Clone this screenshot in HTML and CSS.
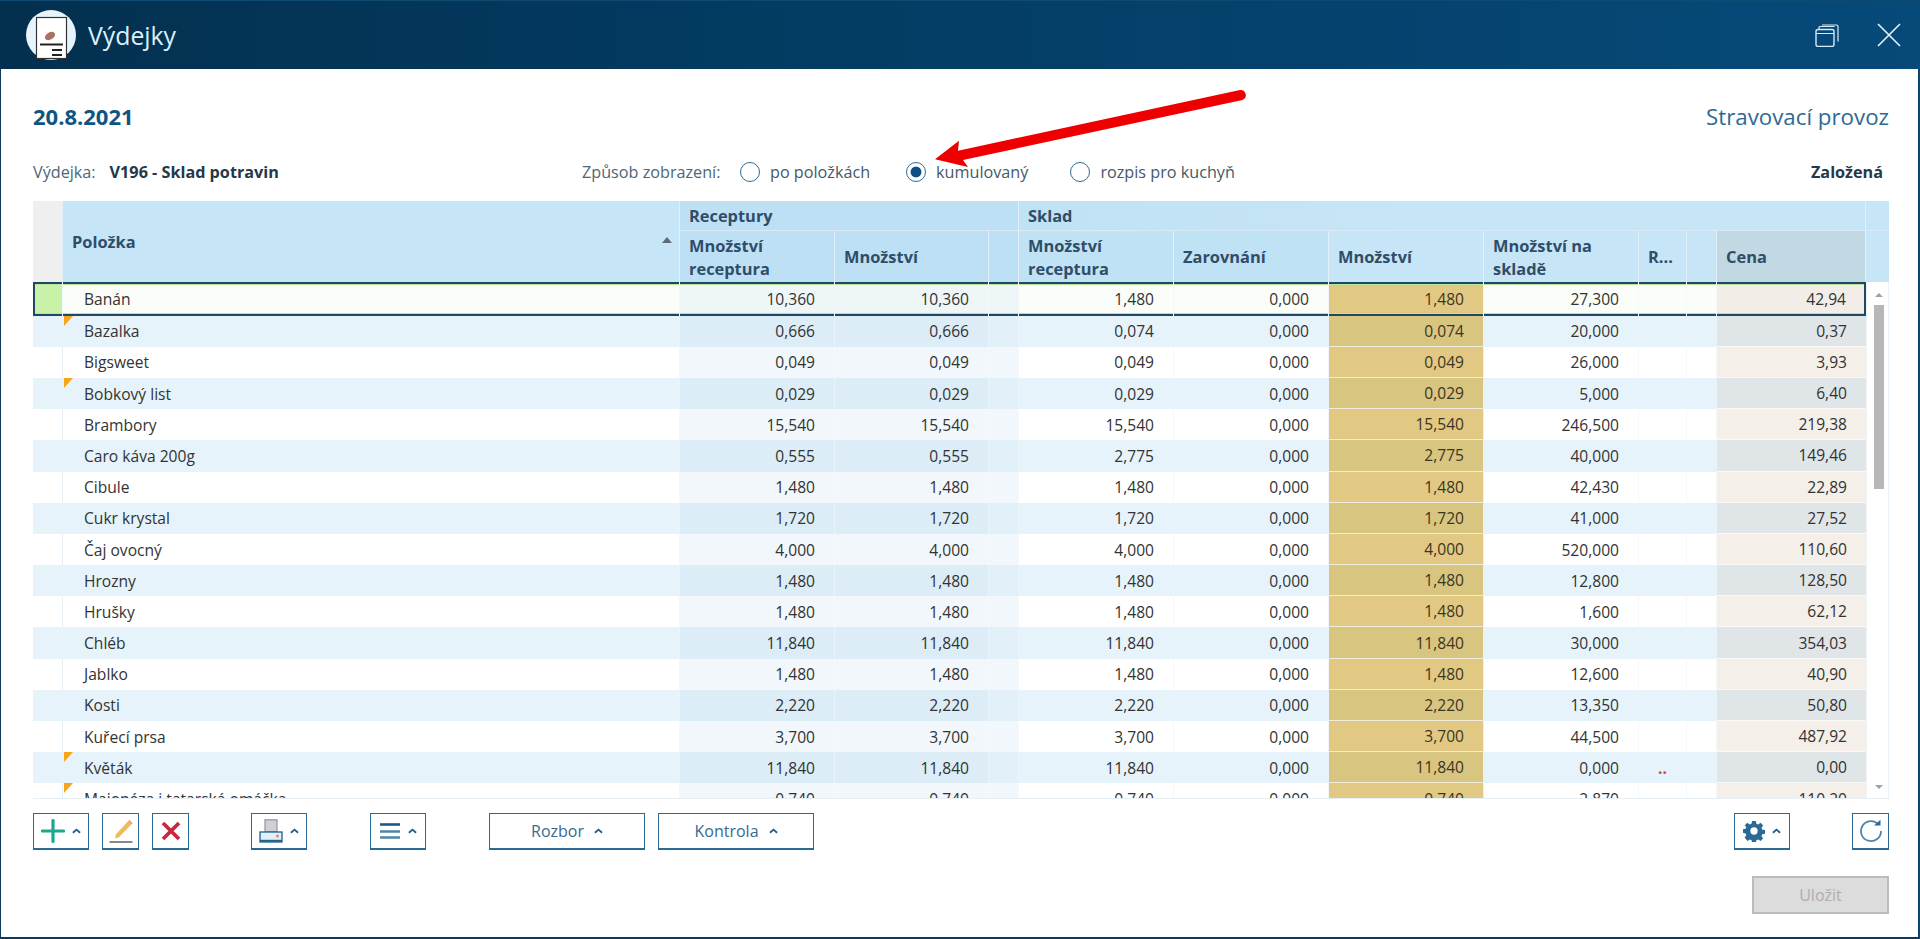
FILE: index.html
```html
<!DOCTYPE html>
<html lang="cs">
<head>
<meta charset="utf-8">
<title>Výdejky</title>
<link rel="stylesheet" href="styles.css">
</head>
<body>
<div class="window">
  <header class="titlebar">
    <svg class="logo" viewBox="0 0 50 50" width="50" height="50">
      <circle cx="25" cy="25" r="25" fill="#e8f4fc"/>
      <rect x="10.5" y="7.5" width="30" height="41" fill="#fff" stroke="#333" stroke-width="1.2"/>
      <ellipse cx="24" cy="26" rx="5.5" ry="3.6" fill="#a9745f" transform="rotate(-30 24 26)"/>
      <path d="M14 34.5h23" stroke="#222" stroke-width="2"/>
      <path d="M26 40h10M26 45h10" stroke="#222" stroke-width="2"/>
    </svg>
    <h1 class="app-title">Výdejky</h1>
    <div class="win-controls">
      <svg viewBox="0 0 24 23" width="24" height="23" class="win-icon">
        <rect x="1" y="5.5" width="18" height="17" rx="2" fill="none" stroke="#d8eaf6" stroke-width="1.4"/>
        <path d="M1 9.5h18M4 5V3.4Q4 2.5 5 2.5h14.6" fill="none" stroke="#d8eaf6" stroke-width="1.2"/>
        <path d="M7 1h14.5q1.500 0 1.500 1.500v15" fill="none" stroke="#d8eaf6" stroke-width="1.2"/>
      </svg>
      <svg viewBox="0 0 24 24" width="24" height="24" class="win-icon">
        <path d="M1 1l22 22M23 1L1 23" stroke="#e8f3fb" stroke-width="1.6" fill="none"/>
      </svg>
    </div>
  </header>

  <main class="content">
    <div class="top-row">
      <div class="date">20.8.2021</div>
      <div class="place">Stravovací provoz</div>
    </div>

    <div class="info-row">
      <div class="doc"><span class="doc-label">Výdejka:</span><strong class="doc-value">V196 - Sklad potravin</strong></div>
      <div class="view-mode">
        <span class="mode-label">Způsob zobrazení:</span>
        <span class="option opt-a"><i class="radio"></i>po položkách</span>
        <span class="option opt-b"><i class="radio checked"></i>kumulovaný</span>
        <span class="option opt-c"><i class="radio"></i>rozpis pro kuchyň</span>
      </div>
      <strong class="state">Založená</strong>
    </div>

    <section class="table">
      <div class="thead">
        <div class="th th-ind"></div>
        <div class="th th-item">Položka<i class="sort"></i></div>
        <div class="th th-group th-rec">Receptury</div>
        <div class="th th-group th-sklad">Sklad</div>
        <div class="th th-end"></div>
        <div class="th th-sub dark">Množství receptura</div>
        <div class="th th-sub dark">Množství</div>
        <div class="th th-sub dark"></div>
        <div class="th th-sub mid">Množství receptura</div>
        <div class="th th-sub mid">Zarovnání</div>
        <div class="th th-sub">Množství</div>
        <div class="th th-sub">Množství na skladě</div>
        <div class="th th-sub">R...</div>
        <div class="th th-sub"></div>
        <div class="th th-sub th-cena">Cena</div>
        <div class="th th-end2"></div>
      </div>
      <div class="tbody">
        <div class="rows">
          <div class="row sel"><div class="c ind"></div><div class="c name">Banán</div><div class="c rc">10,360</div><div class="c rc">10,360</div><div class="c rc"></div><div class="c">1,480</div><div class="c">0,000</div><div class="c gold">1,480</div><div class="c">27,300</div><div class="c"></div><div class="c"></div><div class="c cena">42,94</div></div>
          <div class="row alt"><div class="c ind"></div><div class="c name flag">Bazalka</div><div class="c rc">0,666</div><div class="c rc">0,666</div><div class="c rc gapc"></div><div class="c">0,074</div><div class="c">0,000</div><div class="c gold">0,074</div><div class="c">20,000</div><div class="c"></div><div class="c"></div><div class="c cena">0,37</div></div>
          <div class="row"><div class="c ind"></div><div class="c name">Bigsweet</div><div class="c rc">0,049</div><div class="c rc">0,049</div><div class="c rc"></div><div class="c">0,049</div><div class="c">0,000</div><div class="c gold">0,049</div><div class="c">26,000</div><div class="c"></div><div class="c"></div><div class="c cena">3,93</div></div>
          <div class="row alt"><div class="c ind"></div><div class="c name flag">Bobkový list</div><div class="c rc">0,029</div><div class="c rc">0,029</div><div class="c rc gapc"></div><div class="c">0,029</div><div class="c">0,000</div><div class="c gold">0,029</div><div class="c">5,000</div><div class="c"></div><div class="c"></div><div class="c cena">6,40</div></div>
          <div class="row"><div class="c ind"></div><div class="c name">Brambory</div><div class="c rc">15,540</div><div class="c rc">15,540</div><div class="c rc"></div><div class="c">15,540</div><div class="c">0,000</div><div class="c gold">15,540</div><div class="c">246,500</div><div class="c"></div><div class="c"></div><div class="c cena">219,38</div></div>
          <div class="row alt"><div class="c ind"></div><div class="c name">Caro káva 200g</div><div class="c rc">0,555</div><div class="c rc">0,555</div><div class="c rc gapc"></div><div class="c">2,775</div><div class="c">0,000</div><div class="c gold">2,775</div><div class="c">40,000</div><div class="c"></div><div class="c"></div><div class="c cena">149,46</div></div>
          <div class="row"><div class="c ind"></div><div class="c name">Cibule</div><div class="c rc">1,480</div><div class="c rc">1,480</div><div class="c rc"></div><div class="c">1,480</div><div class="c">0,000</div><div class="c gold">1,480</div><div class="c">42,430</div><div class="c"></div><div class="c"></div><div class="c cena">22,89</div></div>
          <div class="row alt"><div class="c ind"></div><div class="c name">Cukr krystal</div><div class="c rc">1,720</div><div class="c rc">1,720</div><div class="c rc gapc"></div><div class="c">1,720</div><div class="c">0,000</div><div class="c gold">1,720</div><div class="c">41,000</div><div class="c"></div><div class="c"></div><div class="c cena">27,52</div></div>
          <div class="row"><div class="c ind"></div><div class="c name">Čaj ovocný</div><div class="c rc">4,000</div><div class="c rc">4,000</div><div class="c rc"></div><div class="c">4,000</div><div class="c">0,000</div><div class="c gold">4,000</div><div class="c">520,000</div><div class="c"></div><div class="c"></div><div class="c cena">110,60</div></div>
          <div class="row alt"><div class="c ind"></div><div class="c name">Hrozny</div><div class="c rc">1,480</div><div class="c rc">1,480</div><div class="c rc gapc"></div><div class="c">1,480</div><div class="c">0,000</div><div class="c gold">1,480</div><div class="c">12,800</div><div class="c"></div><div class="c"></div><div class="c cena">128,50</div></div>
          <div class="row"><div class="c ind"></div><div class="c name">Hrušky</div><div class="c rc">1,480</div><div class="c rc">1,480</div><div class="c rc"></div><div class="c">1,480</div><div class="c">0,000</div><div class="c gold">1,480</div><div class="c">1,600</div><div class="c"></div><div class="c"></div><div class="c cena">62,12</div></div>
          <div class="row alt"><div class="c ind"></div><div class="c name">Chléb</div><div class="c rc">11,840</div><div class="c rc">11,840</div><div class="c rc gapc"></div><div class="c">11,840</div><div class="c">0,000</div><div class="c gold">11,840</div><div class="c">30,000</div><div class="c"></div><div class="c"></div><div class="c cena">354,03</div></div>
          <div class="row"><div class="c ind"></div><div class="c name">Jablko</div><div class="c rc">1,480</div><div class="c rc">1,480</div><div class="c rc"></div><div class="c">1,480</div><div class="c">0,000</div><div class="c gold">1,480</div><div class="c">12,600</div><div class="c"></div><div class="c"></div><div class="c cena">40,90</div></div>
          <div class="row alt"><div class="c ind"></div><div class="c name">Kosti</div><div class="c rc">2,220</div><div class="c rc">2,220</div><div class="c rc gapc"></div><div class="c">2,220</div><div class="c">0,000</div><div class="c gold">2,220</div><div class="c">13,350</div><div class="c"></div><div class="c"></div><div class="c cena">50,80</div></div>
          <div class="row"><div class="c ind"></div><div class="c name">Kuřecí prsa</div><div class="c rc">3,700</div><div class="c rc">3,700</div><div class="c rc"></div><div class="c">3,700</div><div class="c">0,000</div><div class="c gold">3,700</div><div class="c">44,500</div><div class="c"></div><div class="c"></div><div class="c cena">487,92</div></div>
          <div class="row alt"><div class="c ind"></div><div class="c name flag">Květák</div><div class="c rc">11,840</div><div class="c rc">11,840</div><div class="c rc gapc"></div><div class="c">11,840</div><div class="c">0,000</div><div class="c gold">11,840</div><div class="c">0,000</div><div class="c warn">..</div><div class="c"></div><div class="c cena">0,00</div></div>
          <div class="row"><div class="c ind"></div><div class="c name flag">Majonéza i tatarská omáčka</div><div class="c rc">0,740</div><div class="c rc">0,740</div><div class="c rc"></div><div class="c">0,740</div><div class="c">0,000</div><div class="c gold">0,740</div><div class="c">2,870</div><div class="c"></div><div class="c"></div><div class="c cena">110,20</div></div>
        </div>
        <div class="scrollbar">
          <i class="sb-up"></i>
          <i class="sb-thumb"></i>
          <i class="sb-down"></i>
        </div>
      </div>
    </section>

    <div class="toolbar">
      <button class="btn btn-drop"><svg viewBox="0 0 24 24" width="24" height="24"><path d="M12 1.500v21M1.500 12h21" stroke="#1ba88f" stroke-width="3.200" stroke-linecap="round"/></svg><svg class="chev" viewBox="0 0 10 6" width="9" height="6"><path d="M1 5l4-3.500L9 5" fill="none" stroke="#1f5f8a" stroke-width="2"/></svg></button>
      <button class="btn btn-sq"><svg viewBox="0 0 26 26" width="26" height="26"><path d="M7 20.500l1-4.300L20 3.300l3.300 3.200L11 19.300z" fill="#f0bb5a"/><path d="M20 3.300l1.200-1.300 3.300 3.200-1.200 1.300z" fill="#ee8c8c"/><path d="M1.500 24h23" stroke="#8d8495" stroke-width="2"/></svg></button>
      <button class="btn btn-sq"><svg viewBox="0 0 20 20" width="20" height="20"><path d="M2 2l16 16M18 2L2 18" stroke="#c9283c" stroke-width="3.800"/></svg></button>
      <button class="btn btn-drop gap-s"><svg viewBox="0 0 24 24" width="24" height="24"><rect x="6" y="0.800" width="12" height="12" fill="#cfcfd4" stroke="#8b97a2" stroke-width="1.200"/><rect x="1" y="13" width="22" height="10" fill="#dff1f9" stroke="#1f5f8a" stroke-width="1.300"/><path d="M1 21.800h22" stroke="#1f5f8a" stroke-width="2"/><circle cx="18.500" cy="17" r="1.600" fill="#ee7f85"/></svg><svg class="chev" viewBox="0 0 10 6" width="9" height="6"><path d="M1 5l4-3.500L9 5" fill="none" stroke="#1f5f8a" stroke-width="2"/></svg></button>
      <button class="btn btn-drop gap-l"><svg viewBox="0 0 22 18" width="22" height="18"><path d="M1 2.500h20" stroke="#175a8a" stroke-width="2.600"/><path d="M1 9.500h20M1 15.500h20" stroke="#4d84a8" stroke-width="2.600"/></svg><svg class="chev" viewBox="0 0 10 6" width="9" height="6"><path d="M1 5l4-3.500L9 5" fill="none" stroke="#1f5f8a" stroke-width="2"/></svg></button>
      <button class="btn btn-wide gap-l">Rozbor<svg class="chev" viewBox="0 0 10 6" width="9" height="6"><path d="M1 5l4-3.500L9 5" fill="none" stroke="#1f5f8a" stroke-width="2"/></svg></button>
      <button class="btn btn-wide">Kontrola<svg class="chev" viewBox="0 0 10 6" width="9" height="6"><path d="M1 5l4-3.500L9 5" fill="none" stroke="#1f5f8a" stroke-width="2"/></svg></button>
      <button class="btn btn-drop push-r"><svg viewBox="0 0 24 24" width="22" height="22"><path fill="#2a6a94" fill-rule="evenodd" d="M10 1h4l.6 3.100 2 .8 2.600-1.800 2.800 2.800-1.800 2.600.8 2 3 .5v4l-3 .6-.8 2 1.800 2.600-2.800 2.800-2.600-1.800-2 .8-.6 3h-4l-.6-3-2-.8-2.600 1.800L1.800 19.200l1.800-2.600-.8-2-3-.6v-4l3-.5.8-2L1.800 5.900l2.800-2.800 2.600 1.800 2-.8zM12 8a4 4 0 1 0 0 8 4 4 0 0 0 0-8z"/></svg><svg class="chev" viewBox="0 0 10 6" width="9" height="6"><path d="M1 5l4-3.500L9 5" fill="none" stroke="#1f5f8a" stroke-width="2"/></svg></button>
      <button class="btn btn-sq gap-s"><svg viewBox="0 0 24 24" width="24" height="24"><path d="M19.500 5.500A10 10 0 1 0 22 12" fill="none" stroke="#4d84a8" stroke-width="1.800"/><path d="M15 6.500h6.500V0.800z" fill="#2a6a94"/></svg></button>
    </div>

    <div class="save-row"><button class="btn-save">Uložit</button></div>
  </main>

  <svg class="annotation" viewBox="0 0 320 90" width="320" height="90">
    <path d="M6 74.300L30 55.700 29 65.700 311 5A5.200 5.200 0 0 1 313.500 15L34 75 39 82Z" fill="#ee0000"/>
  </svg>
</div>
</body>
</html>
```

FILE: styles.css
```css
* { box-sizing: border-box; }
html, body { margin: 0; height: 100%; overflow: hidden; }
body { font-family: "Open Sans", "Liberation Sans", sans-serif; font-size: 15.6px; color: #333; background: #fff; }

.window { position: relative; width: 1920px; height: 939px; display: flex; flex-direction: column; border-left: 1px solid #0b3a5c; border-right: 2px solid #0b456f; border-bottom: 2px solid #0b3a5c; background: #fff; }

.titlebar { height: 69px; flex: none; display: flex; align-items: center; margin-left: -1px; margin-right: -2px; padding: 0 19px 0 26px; background: linear-gradient(90deg, #03304f 0%, #043e66 50%, #064a7a 100%); border-top: 1px solid #0f4a72; }
.logo { flex: none; margin-top: -1px; }
.app-title { margin: 0 0 0 12px; font-size: 24.8px; font-weight: 400; color: #dceffb; line-height: 1; }
.win-controls { margin-left: auto; display: flex; align-items: center; gap: 38px; }
.win-icon { display: block; }

.content { flex: 1; display: flex; flex-direction: column; padding: 32px 29px 0 32px; min-height: 0; }

.top-row { height: 30px; display: flex; justify-content: space-between; align-items: center; }
.date { font-size: 22px; font-weight: 700; color: #0f5583; }
.place { font-size: 22.3px; color: #2c6a94; }

.info-row { margin-top: 29px; height: 24px; display: flex; align-items: center; font-size: 16.2px; }
.doc { width: 549px; flex: none; }
.doc-label { color: #4d6678; }
.doc-value { margin-left: 14px; color: #24384a; }
.view-mode { display: flex; align-items: center; color: #4d6678; }
.mode-label { width: 158px; }
.option { display: flex; align-items: center; gap: 10px; color: #45596a; }
.opt-b { margin-left: 36px; }
.opt-c { margin-left: 42px; }
.radio { display: block; width: 20px; height: 20px; border-radius: 50%; border: 1.5px solid #2c6a94; background: #fff; }
.radio.checked { background: radial-gradient(circle, #0f4f86 0 5px, #fff 5.8px); }
.state { margin-left: auto; margin-right: 6px; color: #24384a; }

.table { height: 598px; flex: none; margin-top: 17px; display: flex; flex-direction: column; }

.thead { flex: none; height: 81px; display: grid; grid-template-columns: 30px 617px 155px 154px 30px 155px 155px 155px 155px 48px 30px 149px 23px; grid-template-rows: 30px 51px; background: #c6e5f6; color: #2f4d68; font-weight: 700; font-size: 16.4px; line-height: 23px; }
.th { display: flex; align-items: center; padding-left: 9px; padding-right: 6px; border-right: 1px solid #e2eff8; }
.th-ind { grid-row: 1 / 3; background: #efefef; }
.th-item { grid-row: 1 / 3; position: relative; }
.th-group { border-bottom: 1px solid #d8eaf6; }
.th-rec { grid-column: 3 / 6; background: #bde0f4; }
.th-sklad { grid-column: 6 / 13; background: linear-gradient(90deg, #c0e2f5, #c6e5f6 45%); }
.th-end { border-bottom: 1px solid #d8eaf6; border-right: 0; }
.th-end2 { border-right: 0; }
.th-sub.dark { background: #bde0f4; }
.th-sub.mid { background: #c0e2f5; }
.th-cena { background: #c2d8e2; }
.sort { position: absolute; right: 7px; top: 36px; width: 0; height: 0; border-left: 5.5px solid transparent; border-right: 5.5px solid transparent; border-bottom: 6px solid #5d6b76; }

.tbody { flex: 1; min-height: 0; display: flex; overflow: hidden; border-bottom: 1px solid #e6eff6; }
.rows { width: 1833px; flex: none; }
.row { height: 31.2px; display: grid; grid-template-columns: 30px 617px 155px 154px 30px 155px 155px 155px 155px 48px 30px 149px; background: #fff; }
.row.alt { background: #e6f3fb; }
.c { display: flex; align-items: center; justify-content: flex-end; padding-right: 19px; border-right: 1px solid #f4f8fc; white-space: nowrap; }
.row.alt .c { border-right-color: #eaf4fb; }
.c.name { justify-content: flex-start; padding-left: 21px; padding-right: 0; position: relative; }
.c.ind { padding: 0; border-right-color: #e6eef5; }
.c.rc { background: #f2f7fb; }
.row.alt .c.rc { background: #dcedf8; }
.row.alt .c.rc.gapc { background: #e2f0f9; }
.c.gold { background: #e1c983; border-right-color: #f4efdf; border-bottom: 1px solid #f1ecd9; color: #3d3524; }
.row.alt .c.gold { background: #d7c580; border-right-color: #f4efdf; }
.c.cena { background: #f4efe9; border-bottom: 1px solid #fbf9f6; border-right: 0; }
.row.alt .c.cena { background: #e0e5e8; }
.c.warn { justify-content: center; padding: 0; color: #e2453f; font-weight: 700; }
.flag::before { content: ""; position: absolute; left: 1px; top: 0; border-top: 10px solid #f7a51c; border-right: 9px solid transparent; }

.row.sel { height: 33.6px; background: #fbfdf8; }
.row.sel .c { border-right-color: #f3f8fb; box-shadow: inset 0 2px #1f4864, inset 0 3px #b8e39a, inset 0 -2px #1f4864, inset 0 -3px #b8e39a; }
.row.sel .c.ind { background: #c9f2a9; border-left: 2px solid #1f4864; }
.row.sel .c.rc { background: #eef6f8; }
.row.sel .c.cena { background: #f2eee7; border-right: 2px solid #1f4864; border-bottom: 0; padding-right: 18px; }
.row.sel .c.gold { background: #e1c983; border-bottom: 0; }

.scrollbar { flex: 1; position: relative; background: #fff; border-left: 1px solid #eef3f8; border-right: 1px solid #e8f0f8; }
.scrollbar i { position: absolute; display: block; }
.sb-up { left: 8px; top: 11px; border-left: 4px solid transparent; border-right: 4px solid transparent; border-bottom: 4px solid #9aa3aa; }
.sb-thumb { left: 7px; top: 23px; width: 10px; height: 184px; background: #b7b7b7; }
.sb-down { left: 8px; bottom: 9px; border-left: 4px solid transparent; border-right: 4px solid transparent; border-top: 4px solid #9aa3aa; }

.toolbar { flex: none; margin-top: 14px; height: 37px; display: flex; gap: 13px; }
.btn { height: 37px; display: flex; align-items: center; justify-content: center; background: #fff; border: 1.5px solid #2a6a94; border-bottom-width: 2px; padding: 0; font-family: inherit; font-size: 16px; color: #386a8e; }
.btn-drop { width: 56px; gap: 7px; }
.btn-sq { width: 37px; }
.btn-wide { width: 156px; gap: 10px; }
.gap-s { margin-left: 49px; }
.gap-l { margin-left: 50px; }
.push-r { margin-left: auto; }
.btn svg { display: block; flex: none; }

.save-row { margin-top: 26px; display: flex; justify-content: flex-end; }
.btn-save { width: 137px; height: 38px; background: #dcdcdc; border: 2px solid #bcbcbc; font-family: inherit; font-size: 16px; color: #aeaeae; padding: 0; }

.annotation { position: absolute; left: 928px; top: 85px; pointer-events: none; }
```
